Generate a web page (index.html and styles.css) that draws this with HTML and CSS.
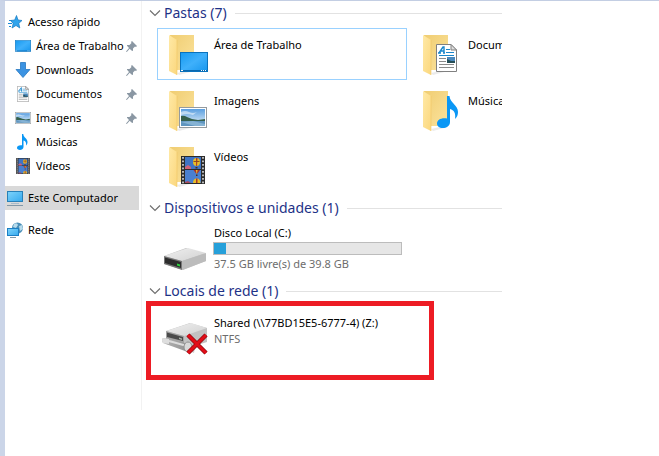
FILE: index.html
```
<!DOCTYPE html>
<html lang="pt-BR">
<head>
    <meta charset="UTF-8">
    <meta name="viewport" content="width=device-width, initial-scale=1.0">
    <title>Este Computador</title>
    <link rel="stylesheet" href="styles.css">
</head>
<body>
    <!-- shared drawings -->
    <svg class="defs" aria-hidden="true">
        <defs>
            <linearGradient id="gBack" x1="0" y1="0" x2="1" y2="1"><stop offset="0" stop-color="#f0cd72"/><stop offset="1" stop-color="#fbe39d"/></linearGradient>
            <linearGradient id="gFlap" x1="0" y1="0" x2="1" y2="1"><stop offset="0" stop-color="#ffe9a6"/><stop offset="1" stop-color="#fbd77d"/></linearGradient>
            <linearGradient id="gBlue" x1="0" y1="0" x2="1" y2="1"><stop offset="0" stop-color="#169af0"/><stop offset=".5" stop-color="#3fb0fb"/><stop offset="1" stop-color="#1696ee"/></linearGradient>
            <linearGradient id="gScreen" x1="0" y1="0" x2="1" y2="1"><stop offset="0" stop-color="#7fd4fb"/><stop offset="1" stop-color="#35a9ee"/></linearGradient>
            <linearGradient id="gSky" x1="0" y1="0" x2="0" y2="1"><stop offset="0" stop-color="#5a9fe0"/><stop offset="1" stop-color="#eef7fc"/></linearGradient>
            <linearGradient id="gTop" x1="0" y1="0" x2="1" y2="1"><stop offset="0" stop-color="#efefef"/><stop offset="1" stop-color="#d2d2d2"/></linearGradient>
            <linearGradient id="gSide" x1="0" y1="0" x2="1" y2="0"><stop offset="0" stop-color="#b4b4b4"/><stop offset="1" stop-color="#8f8f8f"/></linearGradient>
        </defs>
        <symbol id="folder" viewBox="0 0 48 48">
            <path d="M9 5H33V36L30 40H12Z" fill="url(#gBack)"/>
            <path d="M16 43L33 39V41L18 45Z" fill="#000" opacity=".08"/>
            <path d="M8 5L16 10V45L8 41Z" fill="url(#gFlap)"/>
            <path d="M16 10V45" stroke="#f0c866" stroke-width=".6"/>
        </symbol>
        <symbol id="desktop" viewBox="0 0 28 20">
            <rect x=".5" y=".5" width="27" height="19" fill="url(#gBlue)" stroke="#0a72bd"/>
            <path d="M1 18.5H27" stroke="#0b68ad"/>
            <path d="M1 18.5H3M21 18.5H22M23 18.5H24M25 18.5H26" stroke="#fff"/>
        </symbol>
        <symbol id="picture" viewBox="0 0 28 21">
            <rect x=".5" y=".5" width="27" height="20" fill="#fff" stroke="#949a9e"/>
            <rect x="2" y="2" width="24" height="17" fill="url(#gSky)"/>
            <path d="M2 5Q6 3 10 5T18 5L14 8Q8 6 2 8Z" fill="#fff" opacity=".5"/>
            <path d="M2 9Q5 8 8 10L13 12L19 13L26 12V15H2Z" fill="#35604d"/>
            <path d="M2 14H26V19H2Z" fill="#5f95bf"/>
            <path d="M2 15L14 14L26 17V19H16Z" fill="#86b3d4"/>
        </symbol>
        <symbol id="document" viewBox="0 0 21 28">
            <path d="M.5 .5H15L20.500 6V27.500H.5Z" fill="#fff" stroke="#808080"/>
            <path d="M15 .5V6H20.500Z" fill="#dedede" stroke="#808080"/>
            <path d="M3 9L7 3H8L8 9M5 7H8M2 9H5M7 9H9" fill="none" stroke="#1b87cc" stroke-width="1.400"/>
            <path d="M10 5.500H14M10 8.500H18M3 11.500H18" stroke="#1b87cc"/>
            <path d="M3 14.500H10M3 17.500H10M3 20.500H18M3 23.500H18" stroke="#8a8a8a"/>
            <rect x="11" y="13" width="8" height="6" fill="#4a88bd"/>
            <path d="M11 15L15 17H19V19H11Z" fill="#254d55"/>
        </symbol>
        <symbol id="note" viewBox="0 0 22 32">
            <path d="M10 0H12.500C13 7 21 9 21 16C21 19 20 21 18 23C19 17 17 14 13 13V26C13 30 9 32 6 32C2 32 0 30 0 27.500C0 24 4 21.500 10 22.500Z" fill="#0a97f5"/>
        </symbol>
        <symbol id="film" viewBox="0 0 24 28">
            <rect width="24" height="28" fill="#2b2b2b"/>
            <rect x="4" y="1" width="16" height="12" fill="#3f74c4"/>
            <rect x="4" y="14" width="16" height="13" fill="#4a80d0"/>
            <path d="M2 1V28M22 1V28" stroke="#e8e8e8" stroke-width="1.500" stroke-dasharray="1.800 1.700"/>
            <path d="M4 11L7 9L10 11V13H4Z" fill="#cf6278"/>
            <ellipse cx="15.500" cy="6" rx="3.500" ry="4" fill="#e8bd26"/>
            <path d="M15 2H16.500L16 10H15.200Z" fill="#a8382c"/>
            <path d="M12.500 5H18.500V6H12.500Z" fill="#8f4a1e"/>
            <path d="M14.500 11H16.500V12.500H14.500Z" fill="#4c2c16"/>
            <path d="M12.500 14H19L16.500 17.500H15Z" fill="#a8322c"/>
            <path d="M15 14H16.500L16 17.500H15.500Z" fill="#e8c52b"/>
            <path d="M15 18.500H16.500V20H15Z" fill="#4c2c16"/>
            <path d="M12 27A3.700 4.500 0 0 1 19.400 27Z" fill="#e8bd26"/>
            <path d="M15 22.500H16.500V27H15Z" fill="#a8382c"/>
            <path d="M4 26L7 25L10 27H4Z" fill="#a84a5c"/>
        </symbol>
        <symbol id="pin" viewBox="0 0 11 11">
            <path d="M6 0L11 5L10 6L9 5.500L7 7.500L7 10L5.500 9.500L3.700 7.700L.8 11L0 10.500L3 7L1 4.800L1 4L3.500 4L5.500 2L5 1Z" fill="#8a97a3"/>
        </symbol>
        <symbol id="chevron" viewBox="0 0 12 8">
            <path d="M1 1.500L6 6.500L11 1.500" fill="none" stroke="#707070" stroke-width="1.200"/>
        </symbol>
    </svg>

    <div class="explorer">
        <nav class="sidebar">
            <a class="item" href="#">
                <svg class="icon" viewBox="0 0 16 16"><path d="M9.500 1.500L11 6L15 6.500L11.800 9.300L12.800 14L9 11.500L5 14L6.200 9.500L3.500 6.500L7.700 6Z" fill="#2fa4ec" stroke="#1579c0" stroke-width=".7"/><path d="M2 6.500H5M1 9.500H5M2 12.500H4" stroke="#1b8ad6"/></svg>
                <span>Acesso rápido</span>
            </a>
            <a class="item sub" href="#">
                <svg class="icon"><use href="#desktop" y="2" width="16" height="12"/></svg>
                <span>Área de Trabalho</span>
                <svg class="pin"><use href="#pin"/></svg>
            </a>
            <a class="item sub" href="#">
                <svg class="icon" viewBox="0 0 16 16"><path d="M5.500 .5H10.500V7.500H15L8 15.500L1 7.500H5.500Z" fill="#3b93e2" stroke="#2778c2" stroke-width=".8"/></svg>
                <span>Downloads</span>
                <svg class="pin"><use href="#pin"/></svg>
            </a>
            <a class="item sub" href="#">
                <svg class="icon"><use href="#document" x="2" width="12" height="16"/></svg>
                <span>Documentos</span>
                <svg class="pin"><use href="#pin"/></svg>
            </a>
            <a class="item sub" href="#">
                <svg class="icon"><use href="#picture" y="2" width="16" height="12"/></svg>
                <span>Imagens</span>
                <svg class="pin"><use href="#pin"/></svg>
            </a>
            <a class="item sub" href="#">
                <svg class="icon"><use href="#note" x="2" width="11" height="16"/></svg>
                <span>Músicas</span>
            </a>
            <a class="item sub" href="#">
                <svg class="icon"><use href="#film" x="1" width="14" height="16"/></svg>
                <span>Vídeos</span>
            </a>
            <a class="item root selected" href="#">
                <svg class="icon" viewBox="0 0 16 16"><rect x=".5" y="1.500" width="15" height="10" fill="url(#gScreen)" stroke="#2880b8"/><path d="M4 13.500H12" stroke="#a9bccb"/><path d="M0 15.500H16" stroke="#8398a8"/></svg>
                <span>Este Computador</span>
            </a>
            <a class="item root" href="#">
                <svg class="icon" viewBox="0 0 16 16"><circle cx="10.500" cy="6" r="5.500" fill="#4a8fb8"/><path d="M7 2Q10 0 11 3L9 6L6 5ZM12 4L15 3L16 7L13 9Z" fill="#b9dcec"/><rect x=".5" y="6.500" width="11" height="7" fill="url(#gScreen)" stroke="#1c7fc4"/><path d="M3 15.500H9" stroke="#8398a8"/></svg>
                <span>Rede</span>
            </a>
        </nav>

        <main class="content">
            <section>
                <h2><svg class="chevron"><use href="#chevron"/></svg>Pastas (7)</h2>
                <div class="tiles">
                    <a class="tile active" href="#">
                        <svg class="thumb"><use href="#folder"/><use href="#desktop" x="19" y="22" width="28" height="20"/></svg>
                        <span class="name">Área de Trabalho</span>
                    </a>
                    <a class="tile" href="#">
                        <svg class="thumb"><use href="#folder"/><use href="#document" x="21" y="14" width="21" height="28"/></svg>
                        <span class="name">Documentos</span>
                    </a>
                    <a class="tile" href="#">
                        <svg class="thumb"><use href="#folder"/><use href="#picture" x="18" y="21" width="28" height="21"/></svg>
                        <span class="name">Imagens</span>
                    </a>
                    <a class="tile" href="#">
                        <svg class="thumb"><use href="#folder"/><use href="#note" x="22" y="10" width="22" height="32"/></svg>
                        <span class="name">Músicas</span>
                    </a>
                    <a class="tile" href="#">
                        <svg class="thumb"><use href="#folder"/><use href="#film" x="20" y="14" width="24" height="28"/></svg>
                        <span class="name">Vídeos</span>
                    </a>
                </div>
            </section>

            <section>
                <h2><svg class="chevron"><use href="#chevron"/></svg>Dispositivos e unidades (1)</h2>
                <div class="tiles">
                    <a class="tile drive" href="#">
                        <svg class="thumb" viewBox="0 0 48 48">
                            <path d="M3 31L25 23L45 29V36L22 45L3 39Z" fill="#c4c4c4"/>
                            <path d="M3 31L27 23L45 28L21 36Z" fill="url(#gTop)"/>
                            <path d="M21 36L45 28V36L21 45Z" fill="#bcbcbc"/>
                            <path d="M3 31L21 36V45L3 39Z" fill="#777"/>
                            <path d="M4 32.500L20 37V43L4 38Z" fill="#2d2d2d"/>
                            <path d="M16 38.500L19 39.500V41.500L16 40.500Z" fill="#2fd43f"/>
                        </svg>
                        <span class="name">
                            <label for="usage">Disco Local (C:)</label>
                            <progress id="usage" value="2.5" max="39.8"></progress>
                            <small>37.5 GB livre(s) de 39.8 GB</small>
                        </span>
                    </a>
                </div>
            </section>

            <section>
                <h2><svg class="chevron"><use href="#chevron"/></svg>Locais de rede (1)</h2>
                <div class="tiles">
                    <a class="tile marked" href="#">
                        <svg class="thumb" viewBox="0 0 48 48">
                            <path d="M5 23L29 15L46 20V34L24 41L5 36Z" fill="#c2c2c2"/>
                            <path d="M5 23L30 15L46 20L23 28Z" fill="url(#gTop)"/>
                            <path d="M5 23L23 28V37L5 32Z" fill="#a3a3a3"/>
                            <path d="M6 24.500L22 29V33L6 29Z" fill="#4b4b4b"/>
                            <path d="M18 29.500L21 30.500V32L18 31Z" fill="#aab5ac"/>
                            <path d="M2 30L8 31L28 36L30 43L24 43L2 35Q0 32 2 30Z" fill="url(#gSide)"/>
                            <path d="M2 30L8 31V36L2 35Q0 32 2 30Z" fill="#dedede"/>
                            <path d="M8 33L26 38" stroke="#dcdcdc" stroke-width="2"/>
                            <ellipse cx="27" cy="39" rx="4" ry="5" fill="#d9d9d9" stroke="#909090"/>
                            <path d="M28 43L33 45L34 40Z" fill="#d0d0d0"/>
                            <path d="M27 27L45 45M45 27L27 45" stroke="#8d0a10" stroke-width="4.500"/>
                            <path d="M27 27L45 45M45 27L27 45" stroke="#e20d18" stroke-width="3"/>
                        </svg>
                        <span class="name">Shared (\\77BD15E5-6777-4) (Z:)<small>NTFS</small></span>
                    </a>
                </div>
            </section>
        </main>
    </div>
</body>
</html>
```
FILE: styles.css
```
*, *::after { box-sizing: border-box; }
body { margin: 0; min-height: 100vh; font-family: "Noto Sans", "Open Sans", sans-serif; font-size: 11px; line-height: 16px; color: #000; background: #fff; border-top: 1px solid #c3cee3; border-left: 5px solid #cbd5e8; }
a { color: inherit; text-decoration: none; }
.defs { position: absolute; width: 0; height: 0; }

.explorer { display: grid; grid-template-columns: 136px minmax(0, 1fr); align-items: start; padding-right: 24%; }

.sidebar { padding: 9px 2px 0 0; }
.item { display: flex; align-items: center; height: 24px; padding: 0 2px; white-space: nowrap; }
.item.sub { padding-left: 10px; }
.item.root { margin-top: 8px; }
.item.selected { background: #d9d9d9; }
.icon { flex: none; width: 16px; height: 16px; margin-right: 5px; }
.pin { flex: none; width: 11px; height: 11px; margin-left: auto; }

.content { overflow: hidden; padding-bottom: 52px; border-left: 1px solid #f2f2f2; }
section + section { margin-top: 4px; }
h2 { display: flex; align-items: center; height: 24px; margin: 0 0 3px; padding-left: 7px; font-size: 14px; font-weight: normal; color: #1e3287; white-space: nowrap; }
h2::after { content: ""; flex: 1; height: 1px; margin-left: 8px; background: #e2e2e2; }
.chevron { width: 12px; height: 8px; margin-right: 3px; }

.tiles { display: grid; grid-template-columns: 250px 250px; grid-auto-rows: 52px; gap: 4px; padding-left: 15px; }
.tile { display: flex; gap: 4px; padding: 1px 3px; border: 1px solid transparent; white-space: nowrap; }
.tile.active { border-color: #99d1ff; }
.thumb { flex: none; width: 48px; height: 48px; }
.name { flex: 1; padding: 7px 0 0 1px; }
.name small { display: block; font-size: 11px; color: #6d6d6d; }

.drive .name { padding: 0; }
.drive label, .drive small { display: block; padding-left: 1px; }
progress { display: block; width: 189px; height: 13px; margin: 1px 0; appearance: none; border: 1px solid #bcbcbc; background: #e6e6e6; }
progress::-webkit-progress-bar { background: #e6e6e6; }
progress::-webkit-progress-value { background: #26a0da; }

/* red frame drawn over the network drive */
.marked { position: relative; }
.marked::after { content: ""; position: absolute; top: -6px; left: -12px; width: 288px; height: 79px; border: 5px solid #ed1c24; }
```
